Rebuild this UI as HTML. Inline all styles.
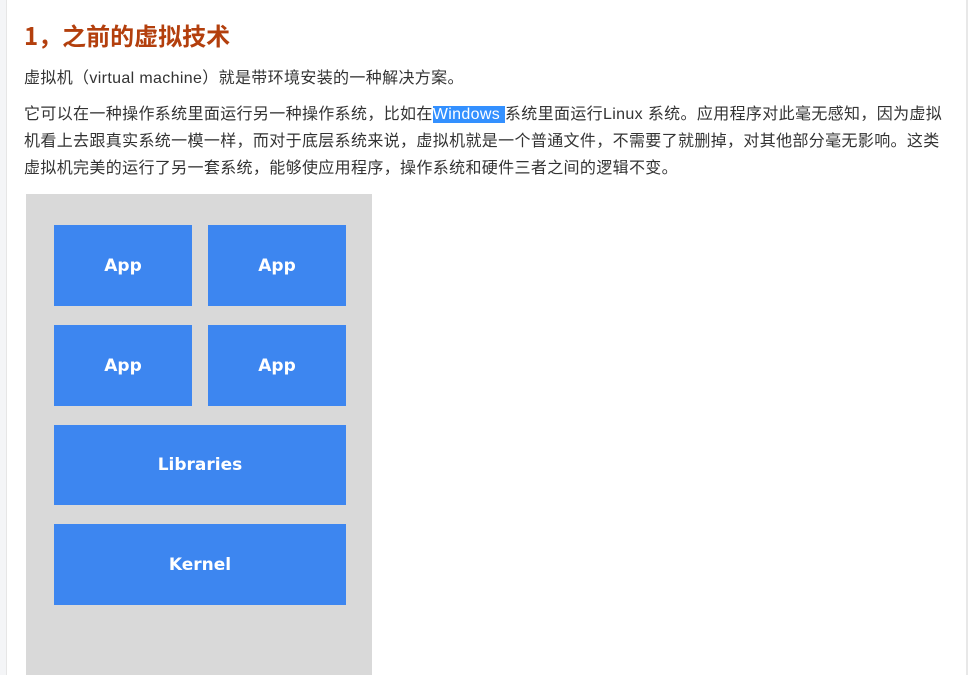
<!DOCTYPE html>
<html><head><meta charset="utf-8"><style>
html,body{margin:0;width:968px;height:675px;overflow:hidden}
body{background:#fff;font-family:"Liberation Sans","Noto Sans CJK SC",sans-serif;position:relative}
.side{position:absolute;left:0;top:0;width:6px;height:675px;background:#f4f5f7;border-right:1px solid #e6e6e6}
.rb{position:absolute;left:966px;top:0;width:2px;height:675px;background:#e8e8e8}
h1{position:absolute;left:24px;top:19px;margin:0;font-size:24px;font-weight:bold;color:#b33f0d;line-height:32px;font-family:"Noto Sans CJK SC",sans-serif}
.l{position:absolute;left:24px;font-size:16px;color:#333;white-space:nowrap;line-height:22px;letter-spacing:0.35px}
.sel{background:#3390ff;color:#fff}
.g{position:absolute;left:26px;top:194px;width:346px;height:481px;background:#d9d9d9}
.b{position:absolute;background:#3d86f0;color:#fff;font-weight:bold;font-size:17px;display:flex;align-items:center;justify-content:center;font-family:"DejaVu Sans","Liberation Sans",sans-serif}
</style></head><body>
<div class="side"></div><div class="rb"></div>
<h1>1，之前的虚拟技术</h1>
<div class="l" style="top:68px">虚拟机（virtual machine）就是带环境安装的一种解决方案。</div>
<div class="l" style="top:104px">它可以在一种操作系统里面运行另一种操作系统，比如在<span class="sel">Windows </span>系统里面运行Linux 系统。应用程序对此毫无感知，因为虚拟</div>
<div class="l" style="top:131px">机看上去跟真实系统一模一样，而对于底层系统来说，虚拟机就是一个普通文件，不需要了就删掉，对其他部分毫无影响。这类</div>
<div class="l" style="top:158px">虚拟机完美的运行了另一套系统，能够使应用程序，操作系统和硬件三者之间的逻辑不变。</div>
<div class="g"></div>
<div class="b" style="left:54px;top:225px;width:138px;height:81px">App</div>
<div class="b" style="left:208px;top:225px;width:138px;height:81px">App</div>
<div class="b" style="left:54px;top:325px;width:138px;height:81px">App</div>
<div class="b" style="left:208px;top:325px;width:138px;height:81px">App</div>
<div class="b" style="left:54px;top:425px;width:292px;height:80px">Libraries</div>
<div class="b" style="left:54px;top:524px;width:292px;height:81px">Kernel</div>
</body></html>
